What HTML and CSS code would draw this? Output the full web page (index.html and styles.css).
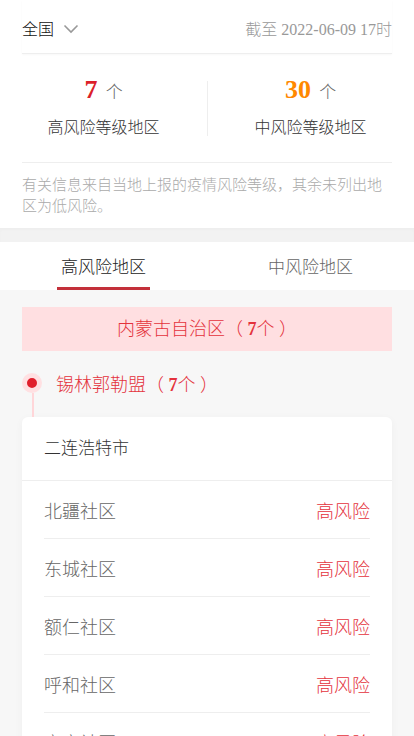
FILE: index.html
```html
<!DOCTYPE html>
<html lang="zh-CN">
<head>
    <meta charset="UTF-8">
    <meta name="viewport" content="width=device-width, initial-scale=1.0">
    <title>疫情风险等级查询</title>
    <link rel="stylesheet" href="styles.css">
</head>
<body>
    <div class="summary">
        <div class="top-bar">
            <div class="area">全国
                <svg class="chevron" width="16" height="10" viewBox="0 0 16 10">
                    <path d="M1.5 1.5 L8 8 L14.5 1.5" fill="none" stroke="#999" stroke-width="1.6"/>
                </svg>
            </div>
            <div class="update-time">截至 2022-06-09 17时</div>
        </div>
        <div class="stats">
            <div class="stat">
                <div class="count"><span class="num high">7</span> 个</div>
                <div class="label">高风险等级地区</div>
            </div>
            <div class="stat">
                <div class="count"><span class="num mid">30</span> 个</div>
                <div class="label">中风险等级地区</div>
            </div>
        </div>
        <p class="note">有关信息来自当地上报的疫情风险等级，其余未列出地区为低风险。</p>
    </div>
    <div class="band"></div>
    <div class="tabs">
        <div class="tab active">高风险地区</div>
        <div class="tab">中风险地区</div>
    </div>
    <div class="content">
        <div class="province">内蒙古自治区（ <span class="n">7</span>个 ）</div>
        <div class="city">
            <span class="dot"></span>
            <span class="city-name">锡林郭勒盟（ <span class="n">7</span>个 ）</span>
        </div>
        <div class="card">
            <div class="card-title">二连浩特市</div>
            <ul class="list">
                <li><span>北疆社区</span><span class="level">高风险</span></li>
                <li><span>东城社区</span><span class="level">高风险</span></li>
                <li><span>额仁社区</span><span class="level">高风险</span></li>
                <li><span>呼和社区</span><span class="level">高风险</span></li>
                <li><span>宝音社区</span><span class="level">高风险</span></li>
            </ul>
        </div>
    </div>
</body>
</html>
```

FILE: styles.css
```css
body {
    margin: 0;
    font-family: "Liberation Serif", "Noto Sans CJK SC", serif;
    font-weight: 300;
    background-color: #f7f7f7;
    color: #333;
}
.summary {
    background-color: #fff;
    padding: 0 22px;
}
.top-bar {
    display: flex;
    justify-content: space-between;
    align-items: center;
    height: 54px;
    border-bottom: 1px solid #eee;
    box-shadow: 0 1px 2px rgba(0, 0, 0, 0.03);
    font-size: 16px;
    padding-top: 2px;
    box-sizing: border-box;
}
.area {
    display: flex;
    align-items: center;
    color: #111;
}
.chevron {
    margin-left: 9px;
    margin-top: 2px;
}
.update-time {
    color: #999;
}
.stats {
    display: flex;
    margin: 0 -22px;
    padding: 15px 0 22px;
}
.stat {
    flex: 1;
    text-align: center;
    position: relative;
}
.stat + .stat::before {
    content: "";
    position: absolute;
    left: 0;
    top: 12px;
    height: 55px;
    width: 1px;
    background-color: #eee;
}
.count {
    font-size: 17px;
    color: #666;
    line-height: 42px;
}
.num {
    font-size: 26px;
    font-weight: bold;
    margin-right: 4px;
}
.num.high {
    color: #dc1f2a;
}
.num.mid {
    color: #ff8800;
}
.label {
    font-size: 16px;
    color: #333;
    line-height: 24px;
    margin-top: 2px;
}
.note {
    margin: 0;
    padding: 12px 0 11px;
    border-top: 1px solid #eee;
    font-size: 15px;
    line-height: 21px;
    color: #aaa;
}
.band {
    height: 14px;
    background-color: #f2f2f2;
    box-shadow: inset 0 2px 3px rgba(0, 0, 0, 0.02);
}
.tabs {
    display: flex;
    background-color: #fff;
    height: 48px;
}
.tab {
    flex: 1;
    display: flex;
    justify-content: center;
    align-items: center;
    padding-bottom: 2px;
    font-size: 17px;
    color: #666;
    position: relative;
}
.tab.active {
    color: #222;
}
.tab.active::after {
    content: "";
    position: absolute;
    bottom: 0;
    left: 50%;
    width: 93px;
    height: 3px;
    margin-left: -47px;
    background-color: #c3303a;
}
.content {
    padding: 17px 22px 0;
}
.province {
    background-color: #ffdfe1;
    color: #e4323c;
    font-size: 18px;
    height: 44px;
    line-height: 44px;
    text-align: center;
}
.n {
    font-weight: bold;
}
.city {
    display: flex;
    align-items: center;
    height: 66px;
    position: relative;
}
.city::after {
    content: "";
    position: absolute;
    left: 10px;
    top: 42px;
    bottom: 0;
    width: 2px;
    background-color: #ffd6d9;
}
.dot {
    width: 10px;
    height: 10px;
    border-radius: 50%;
    background-color: #e01f2c;
    border: 5px solid #ffe0e2;
    margin-top: -2px;
}
.city-name {
    color: #e4323c;
    font-size: 18px;
    margin-left: 14px;
    margin-top: -2px;
}
.card {
    background-color: #fff;
    border-radius: 6px;
    box-shadow: 0 2px 8px rgba(0, 0, 0, 0.04);
}
.card-title {
    height: 63px;
    line-height: 64px;
    padding: 0 22px;
    font-size: 17px;
    color: #333;
    border-bottom: 1px solid #eee;
}
.list {
    list-style: none;
    margin: 0;
    padding: 0 22px;
}
.list li {
    display: flex;
    justify-content: space-between;
    align-items: center;
    height: 57px;
    border-bottom: 1px solid #eee;
    font-size: 18px;
    color: #666;
}
.level {
    color: #e4323c;
}
```
